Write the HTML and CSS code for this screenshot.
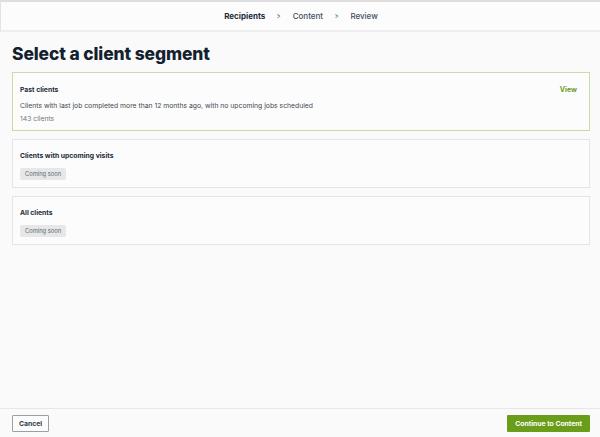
FILE: index.html
```html
<!DOCTYPE html>
<html lang="en">
<head>
  <meta charset="UTF-8">
  <meta name="viewport" content="width=device-width, initial-scale=1.0">
  <title>Select a client segment</title>
  <link rel="stylesheet" href="styles.css">
</head>
<body>

  <div class="page">
    <!-- Step indicator -->
    <div class="steps">
      <span class="step active">Recipients</span>
      <span class="chev">&gt;</span>
      <span class="step">Content</span>
      <span class="chev">&gt;</span>
      <span class="step">Review</span>
    </div>

    <div class="main">
      <h1 class="title">Select a client segment</h1>

      <div class="card selected">
        <div class="card-head">
          <div class="card-title">Past clients</div>
          <a href="#" class="view">View</a>
        </div>
        <div class="card-desc">Clients with last job completed more than 12 months ago, with no upcoming jobs scheduled</div>
        <div class="card-count">143 clients</div>
      </div>

      <div class="card">
        <div class="card-title">Clients with upcoming visits</div>
        <span class="badge">Coming soon</span>
      </div>

      <div class="card">
        <div class="card-title">All clients</div>
        <span class="badge">Coming soon</span>
      </div>
    </div>

    <!-- Footer actions -->
    <div class="footer">
      <button class="btn btn-cancel">Cancel</button>
      <button class="btn btn-primary">Continue to Content</button>
    </div>
  </div>

</body>
</html>
```

FILE: styles.css
```css
body, html {
  margin: 0;
  padding: 0;
  height: 100%;
  font-family: Inter, "Noto Sans", sans-serif;
  background: #fbfafb;
  color: #1b2a38;
}

.page {
  height: 437px;
  display: flex;
  flex-direction: column;
}

.steps {
  height: 28px;
  display: flex;
  align-items: center;
  justify-content: center;
  gap: 11px;
  background: #fdfcfd;
  border-top: 2px solid #dedede;
  border-left: 1px solid #e4e4e4;
  border-bottom: 2px solid #efeeef;
  font-size: 8px;
  font-weight: 500;
  color: #44505c;
  padding-left: 1px;
}

.step.active {
  font-weight: 700;
  color: #1b2a38;
}

.chev {
  color: #6b747d;
  font-size: 8px;
  transform: scaleX(0.7);
}

.main {
  flex-grow: 1;
  padding: 0 10px 0 12px;
  display: flex;
  flex-direction: column;
  gap: 8px;
}

.title {
  margin: 12px 0 0 0;
  font-size: 17.4px;
  font-weight: 800;
  letter-spacing: -0.1px;
  line-height: 20px;
  color: #13222f;
}

.card {
  background: #fdfcfd;
  border: 1px solid #e6e5e6;
  padding: 11px 7px 7px 7px;
  display: flex;
  flex-direction: column;
  align-items: flex-start;
  gap: 8px;
}

.card.selected {
  border: 1px solid #c9dba6;
  padding: 12px 7px 7px 7px;
  gap: 0;
}

.card-head {
  align-self: stretch;
  display: flex;
  justify-content: space-between;
  align-items: center;
  margin-bottom: 7px;
}

.card-title {
  font-size: 6.8px;
  line-height: 9px;
  font-weight: 700;
  color: #1b2a38;
}

.view {
  font-size: 7px;
  line-height: 9px;
  font-weight: 700;
  color: #6a9c1c;
  text-decoration: none;
  margin-right: 5px;
}

.card-desc {
  font-size: 6.8px;
  line-height: 9px;
  color: #3f4850;
  margin-bottom: 4px;
}

.card-count {
  font-size: 6.8px;
  line-height: 9px;
  color: #72777c;
}

.badge {
  background: #e6e7e8;
  color: #5f676f;
  font-size: 5.8px;
  line-height: 12px;
  padding: 0 5px;
  border-radius: 2px;
}

.footer {
  border-top: 1px solid #e8e7e8;
  display: flex;
  justify-content: space-between;
  align-items: center;
  padding: 6px 10px 5px 12px;
}

.btn {
  font-family: Inter, "Noto Sans", sans-serif;
  font-size: 6.8px;
  font-weight: 700;
  height: 17px;
  padding: 0 6px;
  cursor: pointer;
}

.btn-cancel {
  background: #fdfcfd;
  color: #2d3a46;
  border: 1px solid #9aa0a6;
  border-radius: 1px;
}

.btn-primary {
  background: #6a9d1a;
  color: white;
  border: none;
  border-radius: 1px;
  padding: 0 8px;
}
```
